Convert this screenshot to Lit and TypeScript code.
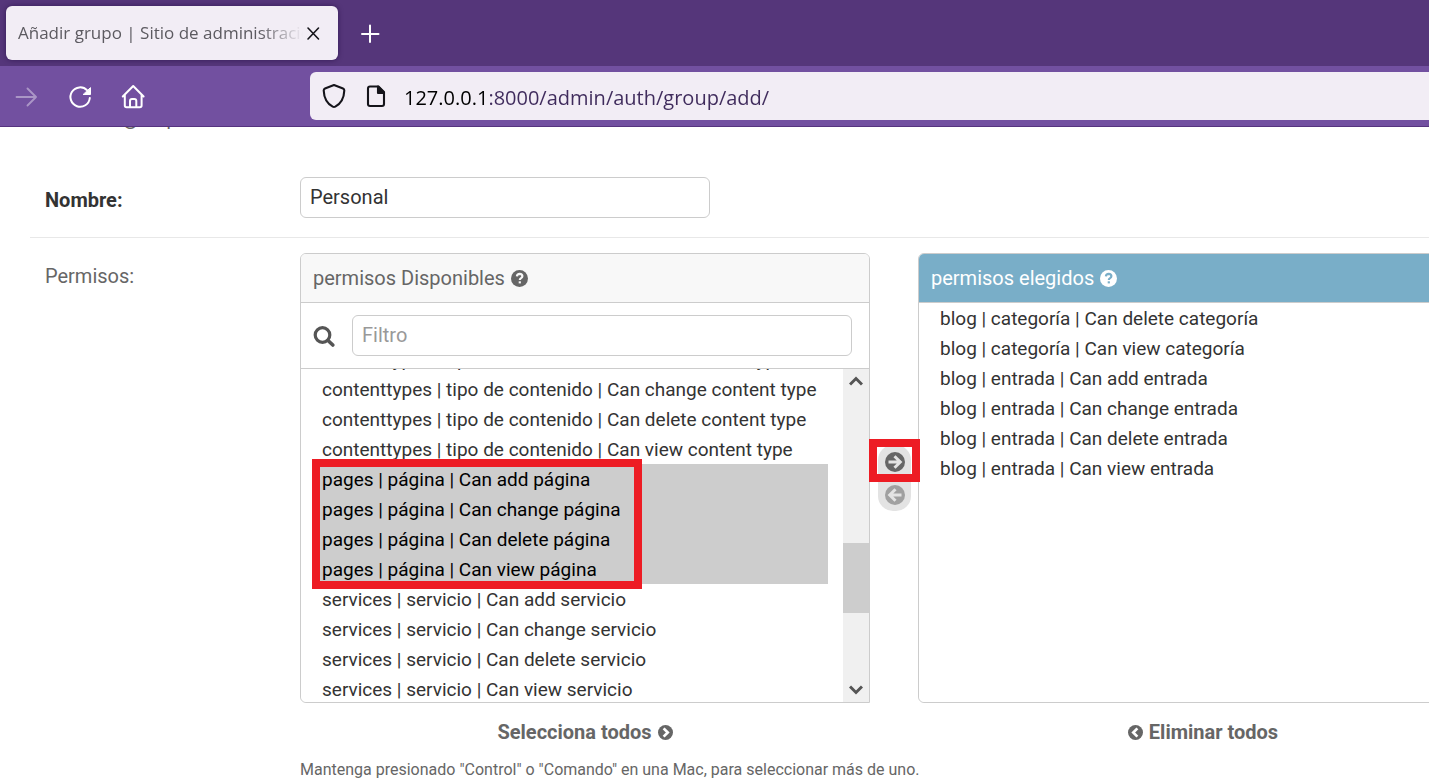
import { LitElement, html, svg, css } from "lit";
import { customElement, property, query } from "lit/decorators.js";

interface Permission {
  label: string;
  selected?: boolean;
}

const AVAILABLE: Permission[] = [
  { label: "contenttypes | tipo de contenido | Can add content type" },
  { label: "contenttypes | tipo de contenido | Can change content type" },
  { label: "contenttypes | tipo de contenido | Can delete content type" },
  { label: "contenttypes | tipo de contenido | Can view content type" },
  { label: "pages | página | Can add página", selected: true },
  { label: "pages | página | Can change página", selected: true },
  { label: "pages | página | Can delete página", selected: true },
  { label: "pages | página | Can view página", selected: true },
  { label: "services | servicio | Can add servicio" },
  { label: "services | servicio | Can change servicio" },
  { label: "services | servicio | Can delete servicio" },
  { label: "services | servicio | Can view servicio" },
];

const CHOSEN: Permission[] = [
  { label: "blog | categoría | Can delete categoría" },
  { label: "blog | categoría | Can view categoría" },
  { label: "blog | entrada | Can add entrada" },
  { label: "blog | entrada | Can change entrada" },
  { label: "blog | entrada | Can delete entrada" },
  { label: "blog | entrada | Can view entrada" },
];

const resets = css`
  * {
    box-sizing: border-box;
  }
  svg {
    display: block;
    flex: none;
  }
  button {
    padding: 0;
    border: 0;
    background: none;
    color: inherit;
    font: inherit;
  }
  input,
  select {
    margin: 0;
    font: inherit;
    outline: none;
  }
`;

@customElement("browser-bar")
export class BrowserBar extends LitElement {
  static styles = [
    resets,
    css`
      :host {
        display: block;
        position: relative;
        font-family: "Open Sans", "Noto Sans", sans-serif;
        border-bottom: 1px solid #56347f;
      }
      .tabs {
        display: flex;
        align-items: center;
        gap: 22px;
        height: 66px;
        padding: 6px;
        background: #55367a;
        color: #fff;
      }
      .tab {
        display: flex;
        align-items: center;
        width: 332px;
        height: 54px;
        padding: 0 12px;
        border-radius: 6px;
        background: #f2edf5;
        color: #5c5a60;
        font-size: 17px;
        box-shadow: 0 0 5px rgba(30, 10, 60, 0.6);
      }
      .title {
        width: 285px;
        overflow: hidden;
        white-space: nowrap;
        text-align: left;
        mask-image: linear-gradient(to left, transparent, #000 44px);
      }
      .close {
        color: #15141a;
      }
      .tools {
        display: flex;
        align-items: center;
        height: 60px;
        padding-left: 14px;
        background: #7250a0;
        color: #fff;
      }
      .nav {
        display: flex;
        flex: none;
        gap: 27px;
        width: 296px;
      }
      .nav button:disabled {
        opacity: 0.4;
      }
      .address {
        display: flex;
        align-items: center;
        flex: 1;
        height: 48px;
        padding-left: 12px;
        gap: 18px;
        border-radius: 6px 0 0 6px;
        background: #f2edf5;
        color: #15141a;
      }
      .url {
        flex: 1;
        min-width: 0;
        height: 36px;
        padding: 2px 0 0;
        border: 0;
        font-size: 20px;
        color: transparent;
        caret-color: #15141a;
        background: linear-gradient(to right, #000 81px, #3f2b5c 81px);
        background-clip: text;
        -webkit-background-clip: text;
      }
    `,
  ];

  render() {
    return html`
      <div class="tabs">
        <div class="tab">
          <span class="title">Añadir grupo | Sitio de administración</span>
          <button class="close" aria-label="Cerrar pestaña">
            <svg width="20" height="20" viewBox="0 0 20 20" fill="none" stroke="currentColor" stroke-width="1.6" stroke-linecap="round">
              <path d="M5 5 15.500 16M15.500 5 5 16" />
            </svg>
          </button>
        </div>
        <button aria-label="Nueva pestaña">
          <svg width="20" height="20" viewBox="0 0 20 20" fill="none" stroke="currentColor" stroke-width="2" stroke-linecap="round">
            <path d="M10 2.500v16.500M2 11h16.500" />
          </svg>
        </button>
      </div>
      <div class="tools">
        <div class="nav">
          <button disabled aria-label="Adelante">
            <svg width="26" height="26" viewBox="0 0 26 26" fill="none" stroke="currentColor" stroke-width="1.800" stroke-linecap="round" stroke-linejoin="round">
              <path d="M2.500 14h19M13.500 5.500l8.500 8.500-8.500 8.500" />
            </svg>
          </button>
          <button aria-label="Recargar">
            <svg width="26" height="26" viewBox="0 0 26 26" fill="none" stroke="currentColor" stroke-width="2" stroke-linecap="round">
              <path d="M22.800 15a9.700 9.700 0 1 1-2.600-7.600" />
              <path d="M23.500 5v6.500h-7z" fill="currentColor" stroke-width="1" stroke-linejoin="round" />
            </svg>
          </button>
          <button aria-label="Inicio">
            <svg width="26" height="26" viewBox="0 0 26 26" fill="none" stroke="currentColor" stroke-width="2" stroke-linecap="round" stroke-linejoin="round">
              <path d="M2.800 13.500 13.200 3l10.400 10.500M4.800 12v10.500q0 1.800 1.800 1.800h13.200q1.800 0 1.800-1.800V12" />
              <path d="M10 24v-6q0-2 2-2h2.300q2 0 2 2v6" />
            </svg>
          </button>
        </div>
        <div class="address">
          <svg width="26" height="26" viewBox="0 0 26 26" fill="none" stroke="currentColor" stroke-width="2.100" stroke-linejoin="round">
            <path d="M12 2 21 5.500q1.400.600 1.300 2c-.300 8-3.300 13-9 16.200q-1.300.700-2.600 0C5 20.500 2 15.500 1.700 7.500q0-1.400 1.300-2z" />
          </svg>
          <svg width="20" height="24" viewBox="0 0 20 24" fill="none" stroke="currentColor" stroke-width="2.100" stroke-linejoin="round">
            <path d="M4 2.500h8.500l5.500 5.500v12q0 2-2 2H4q-2 0-2-2V4.500q0-2 2-2z" />
            <path d="M12 2.500v6.500H18z" fill="currentColor" />
          </svg>
          <input class="url" type="text" aria-label="Dirección" .value=${"127.0.0.1:8000/admin/auth/group/add/"} />
        </div>
      </div>
    `;
  }
}

const helpIcon = html`
  <svg width="17" height="17" viewBox="0 0 17 17">
    <circle cx="8.500" cy="8.500" r="8.500" fill="currentColor" />
    <path d="M5.900 6.400q.200-2.500 2.800-2.500 2.600.100 2.700 2.200 0 1.300-1.300 2-1.300.700-1.300 1.900" fill="none" stroke="var(--mark)" stroke-width="2.200" />
    <path d="M7.700 11.300h2.200v2.100h-2.200z" fill="var(--mark)" />
  </svg>
`;

const arrow = (path: string, size: number, width: number) => html`
  <svg width=${size} height=${size} viewBox="0 0 20 20">
    <circle cx="10" cy="10" r="10" fill="currentColor" />
    ${svg`<path d=${path} fill="none" stroke="var(--mark)" stroke-width=${width} />`}
  </svg>
`;

@customElement("permission-picker")
export class PermissionPicker extends LitElement {
  @property({ attribute: false }) available: Permission[] = [];
  @property({ attribute: false }) chosen: Permission[] = [];
  @query(".source") source!: HTMLSelectElement;

  static styles = [
    resets,
    css`
      :host {
        display: grid;
        grid-template-columns: 570px 48px 570px;
        color: #666;
      }
      .panel {
        position: relative;
        display: flex;
        flex-direction: column;
        height: 450px;
        border: 1px solid #ccc;
        border-radius: 6px 6px 0 6px;
      }
      .panel.target {
        border-radius: 6px;
      }
      .head {
        --mark: #f8f8f8;
        display: flex;
        align-items: center;
        gap: 6px;
        height: 49px;
        padding: 0 12px;
        border-bottom: 1px solid #ccc;
        border-radius: 5px 5px 0 0;
        background: #f8f8f8;
      }
      .target .head {
        --mark: #79aec8;
        background: #79aec8;
        color: #fff;
      }
      .filter {
        display: flex;
        align-items: center;
        gap: 16px;
        height: 66px;
        padding: 0 17px 0 12px;
        border-bottom: 1px solid #ccc;
        color: #555;
      }
      .filter input {
        flex: 1;
        height: 41px;
        padding: 0 9px 2px;
        border: 1px solid #ccc;
        border-radius: 6px;
        color: #333;
      }
      .filter input::placeholder {
        color: #999;
      }
      .list {
        display: flex;
        flex: 1;
        min-height: 0;
      }
      select {
        flex: 1;
        min-width: 0;
        padding: 0 15px 0 12px;
        border: 0;
        border-radius: 6px;
        background: #fff;
        color: #333;
        font-size: 19px;
        scrollbar-width: none;
      }
      option {
        height: 30px;
        min-height: 30px;
        padding: 4px 9px 0;
      }
      option:checked {
        background: #cdcdcd linear-gradient(#cdcdcd, #cdcdcd);
        color: #000;
      }
      .scroller {
        display: grid;
        grid-template-rows: 174px 70px 1fr;
        justify-items: center;
        width: 26px;
        background: #f0f0f0;
        color: #555;
      }
      .thumb {
        width: 100%;
        background: #cdcdcd;
      }
      .up {
        padding-top: 7px;
      }
      .down {
        align-self: end;
        padding-bottom: 7px;
      }
      .mark {
        position: absolute;
        z-index: 1;
        border: 8px solid #ed1c24;
        pointer-events: none;
      }
      .mark.rows {
        top: 205px;
        left: 11px;
        width: 330px;
        height: 130px;
      }
      .middle {
        position: relative;
        padding: 192px 7px 0 8px;
      }
      .mark.add {
        top: 186px;
        left: -1px;
        width: 51px;
        height: 43px;
      }
      .moves {
        --mark: #e3e3e3;
        display: flex;
        flex-direction: column;
        border-radius: 15px;
        background: #e3e3e3;
      }
      .moves button {
        display: grid;
        place-items: center;
        height: 33px;
      }
      .moves .remove {
        color: #a0a0a0;
      }
      .foot {
        --mark: #fff;
        padding-top: 14px;
        text-align: center;
      }
      .foot.left {
        grid-column: 1;
      }
      .foot.right {
        grid-column: 3;
      }
      .foot a {
        display: inline-flex;
        align-items: center;
        gap: 6px;
        line-height: 30px;
        color: #666;
        font-weight: 700;
        text-decoration: none;
      }
    `,
  ];

  firstUpdated() {
    this.source.scrollTop = 25;
  }

  private options(items: Permission[]) {
    return items.map((p) => html`<option ?selected=${p.selected}>${p.label}</option>`);
  }

  render() {
    return html`
      <div class="panel">
        <div class="head"><label for="from">permisos Disponibles</label>${helpIcon}</div>
        <div class="filter">
          <svg width="23" height="23" viewBox="0 0 23 23" fill="none" stroke="currentColor">
            <circle cx="9.500" cy="11" r="7.300" stroke-width="3.200" />
            <path d="m15 16.500 4.800 4.500" stroke-width="3.600" stroke-linecap="round" />
          </svg>
          <input type="text" placeholder="Filtro" aria-label="Filtro" />
        </div>
        <div class="list">
          <select class="source" id="from" multiple>${this.options(this.available)}</select>
          <div class="scroller" aria-hidden="true">
            <svg class="up" width="14" height="17" viewBox="0 0 14 10" fill="none" stroke="currentColor" stroke-width="3">
              <path d="M1 8.500 7 2.500l6 6" />
            </svg>
            <div class="thumb"></div>
            <svg class="down" width="14" height="17" viewBox="0 0 14 10" fill="none" stroke="currentColor" stroke-width="3">
              <path d="m1 1.500 6 6 6-6" />
            </svg>
          </div>
        </div>
        <div class="mark rows"></div>
      </div>
      <div class="middle">
        <div class="moves">
          <button aria-label="Elegir">${arrow("M3.500 10H14.500M9.500 4.200l5.800 5.800-5.800 5.800", 20, 3)}</button>
          <button class="remove" aria-label="Eliminar">${arrow("M16.500 10H5.500M10.500 4.200 4.700 10l5.800 5.800", 20, 3)}</button>
        </div>
        <div class="mark add"></div>
      </div>
      <div class="panel target">
        <div class="head"><label for="to">permisos elegidos</label>${helpIcon}</div>
        <div class="list">
          <select id="to" multiple>${this.options(this.chosen)}</select>
        </div>
      </div>
      <div class="foot left">
        <a href="#">Selecciona todos ${arrow("m7.500 4.500 5.500 5.500-5.500 5.500", 15, 3.6)}</a>
      </div>
      <div class="foot right">
        <a href="#">${arrow("M12.500 4.500 7 10l5.500 5.500", 15, 3.6)} Eliminar todos</a>
      </div>
    `;
  }
}

@customElement("app-root")
export class AppRoot extends LitElement {
  static styles = [
    resets,
    css`
      :host {
        display: block;
        height: 100vh;
        overflow: hidden;
        background: #fff;
        font: 20px/30px Roboto, "Liberation Sans", sans-serif;
        color: #666;
      }
      main {
        padding-left: 30px;
      }
      h1 {
        margin: -32px 0 31px;
        font-size: 30px;
        line-height: 36px;
        font-weight: 300;
      }
      .row {
        display: grid;
        grid-template-columns: 255px 1fr;
        padding: 15px 0 19px 15px;
      }
      .row + .row {
        border-top: 1px solid #e8e8e8;
      }
      .label {
        padding-top: 8px;
      }
      .required {
        font-weight: 700;
        color: #333;
      }
      .name {
        width: 410px;
        height: 41px;
        padding: 0 9px 2px;
        border: 1px solid #ccc;
        border-radius: 6px;
        color: #333;
      }
      .help {
        margin: 10px 0 0;
        font-size: 16px;
        line-height: 24px;
      }
    `,
  ];

  render() {
    return html`
      <browser-bar></browser-bar>
      <main>
        <h1>Añadir grupo</h1>
        <div class="row">
          <label class="label required" for="name">Nombre:</label>
          <input class="name" id="name" type="text" .value=${"Personal"} />
        </div>
        <div class="row">
          <span class="label">Permisos:</span>
          <div>
            <permission-picker .available=${AVAILABLE} .chosen=${CHOSEN}></permission-picker>
            <p class="help">
              Mantenga presionado "Control" o "Comando" en una Mac, para seleccionar más de uno.
            </p>
          </div>
        </div>
      </main>
    `;
  }
}
